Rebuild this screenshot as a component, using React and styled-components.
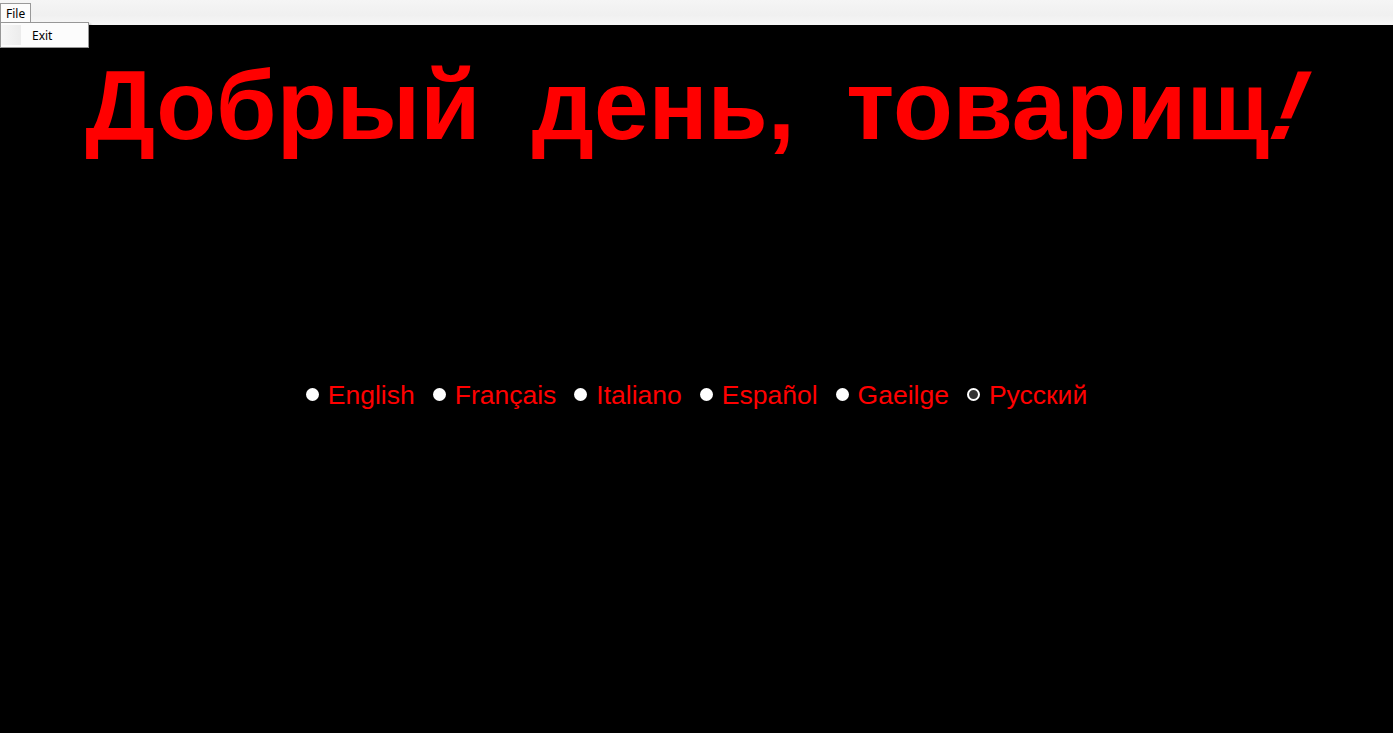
import React, { useState } from "react";
import styled, { createGlobalStyle } from "styled-components";

const Global = createGlobalStyle`
  html, body { margin: 0; padding: 0; height: 100%; background: #000; }
  #root { height: 100%; }
`;

const Window = styled.div`
  width: 100%;
  height: 100vh;
  display: flex;
  flex-direction: column;
  background: #000;
  overflow: hidden;
`;

const MenuBar = styled.div`
  position: relative;
  height: 25px;
  flex: none;
  display: flex;
  align-items: flex-start;
  padding-top: 3px;
  box-sizing: border-box;
  background: linear-gradient(#f5f5f5, #f0f0f0 60%, #f7f7f7);
  font-family: "Noto Sans", "Liberation Sans", sans-serif;
  font-size: 12px;
  color: #000;
`;

const MenuItem = styled.div`
  height: 19px;
  padding: 0 5px;
  box-sizing: border-box;
  display: flex;
  align-items: center;
  border: 1px solid ${(p) => (p.$open ? "#999" : "transparent")};
  border-bottom: none;
  background: ${(p) => (p.$open ? "#fcfcfc" : "transparent")};
  position: relative;
  z-index: 2;
`;

const Dropdown = styled.div`
  position: absolute;
  left: 0;
  top: 22px;
  width: 89px;
  height: 26px;
  box-sizing: border-box;
  border: 1px solid #979797;
  background: #fcfcfc;
  box-shadow: 2px 2px 2px rgba(0, 0, 0, 0.25);
  display: flex;
  z-index: 1;
`;

const IconStrip = styled.div`
  width: 20px;
  margin: 2px 0 2px 0;
  background: linear-gradient(90deg, #f7f7f7, #ececec);
`;

const DropItem = styled.div`
  padding-left: 11px;
  display: flex;
  align-items: center;
  font-size: 12px;
`;

const Main = styled.main`
  flex: 1;
  display: flex;
  flex-direction: column;
  align-items: center;
`;

const Title = styled.h1`
  margin: 20px 0 0;
  font-family: "Liberation Sans", Arial, sans-serif;
  font-weight: bold;
  font-size: 98px;
  line-height: 120px;
  word-spacing: 24px;
  color: #ff0000;
  white-space: nowrap;
`;

const Bang = styled.span`
  display: inline-block;
  margin-left: 6px;
  transform: skewX(-22deg);
  font-weight: bold;
`;

const RadioRow = styled.div`
  margin-top: 215px;
  display: flex;
  align-items: center;
  gap: 18px;
  font-family: "Liberation Sans", Arial, sans-serif;
  font-size: 26.5px;
  color: #ff0000;
`;

const RadioLabel = styled.label`
  display: flex;
  align-items: center;
  gap: 9px;
  cursor: pointer;
`;

const Dot = styled.span`
  width: 13px;
  height: 13px;
  border-radius: 50%;
  box-sizing: border-box;
  background: ${(p) => (p.$checked ? "#333" : "#fff")};
  border: ${(p) => (p.$checked ? "2px solid #fff" : "none")};
  margin-top: -3px;
`;

const langs = ["English", "Français", "Italiano", "Español", "Gaeilge", "Русский"];

export default function App() {
  const [sel, setSel] = useState("Русский");
  return (
    <Window>
      <Global />
      <MenuBar>
        <MenuItem $open>File</MenuItem>
        <Dropdown>
          <IconStrip />
          <DropItem>Exit</DropItem>
        </Dropdown>
      </MenuBar>
      <Main>
        <Title>
          Добрый день, товарищ<Bang>!</Bang>
        </Title>
        <RadioRow>
          {langs.map((l) => (
            <RadioLabel key={l} onClick={() => setSel(l)}>
              <Dot $checked={sel === l} />
              {l}
            </RadioLabel>
          ))}
        </RadioRow>
      </Main>
    </Window>
  );
}
